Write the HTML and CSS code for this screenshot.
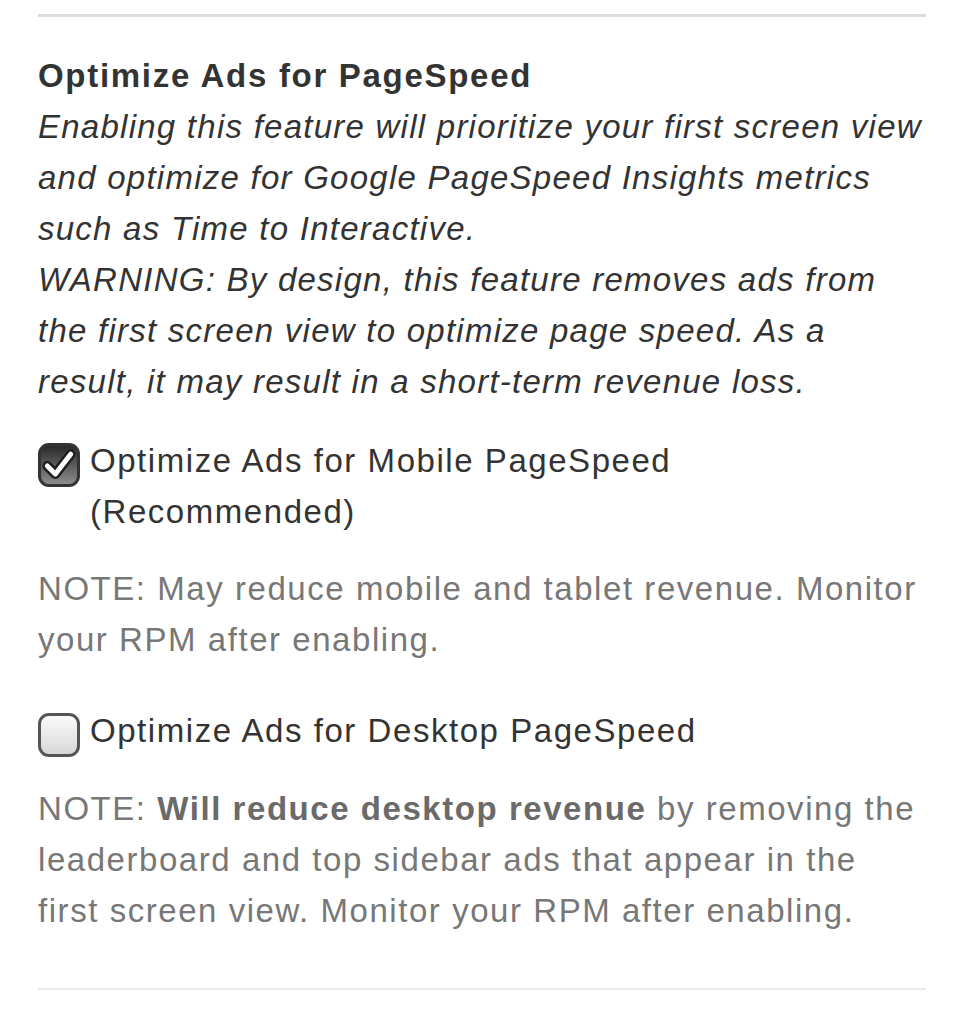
FILE: index.html
```html
<!DOCTYPE html>
<html>
<head>
    <meta charset="utf-8">
    <title>PageSpeed Settings</title>
    <link rel="stylesheet" href="styles.css">
</head>
<body>
    <div class="panel">
        <hr class="divider">

        <div class="setting">
            <h3 class="setting-title">Optimize Ads for PageSpeed</h3>
            <p class="setting-desc">
                Enabling this feature will prioritize your first screen view and optimize for Google PageSpeed Insights metrics such as Time to Interactive.
                <br>
                WARNING: By design, this feature removes ads from the first screen view to optimize page speed. As a<br>result, it may result in a short-term revenue loss.
            </p>

            <label class="option">
                <span class="checkbox checked">
                    <svg viewBox="0 0 40 40" width="36" height="36">
                        <path d="M7 21 L16 30 L33 8" fill="none" stroke="#1e1e1e" stroke-width="11" stroke-linecap="round" stroke-linejoin="round"/>
                        <path d="M7 21 L16 30 L33 8" fill="none" stroke="#fff" stroke-width="5.5" stroke-linecap="round" stroke-linejoin="round"/>
                    </svg>
                </span>
                <span class="option-text">Optimize Ads for Mobile PageSpeed<br>(Recommended)</span>
            </label>
            <p class="note">NOTE: May reduce mobile and tablet revenue. Monitor your RPM after enabling.</p>

            <label class="option option-spaced">
                <span class="checkbox"></span>
                <span class="option-text">Optimize Ads for Desktop PageSpeed</span>
            </label>
            <p class="note">NOTE: <strong>Will reduce desktop revenue</strong> by removing the leaderboard and top sidebar ads that appear in the<br>first screen view. Monitor your RPM after enabling.</p>
        </div>

        <hr class="divider divider-light">
    </div>
</body>
</html>
```

FILE: styles.css
```css
body {
    margin: 0;
    background: #fff;
    font-family: "Liberation Sans", Arial, Helvetica, sans-serif;
    color: #333;
}

.panel {
    width: 888px;
    padding: 14px 0 0 38px;
}

.divider {
    margin: 0;
    border: 0;
    height: 3px;
    background: #dddddd;
}

.divider-light {
    height: 2px;
    margin-top: 52px;
    background: #eaeaea;
}

.setting {
    padding-top: 33px;
    font-size: 33px;
    line-height: 51px;
    letter-spacing: 1.55px;
}

.setting-title {
    margin: 0;
    font-size: 33px;
    font-weight: bold;
    line-height: 51px;
    letter-spacing: 1.7px;
}

.setting-desc {
    margin: 0;
    font-style: italic;
    letter-spacing: 1.25px;
}

.option {
    display: flex;
    align-items: flex-start;
    gap: 10px;
    margin-top: 28px;
}

.option-spaced {
    margin-top: 40px;
}

.checkbox {
    flex: none;
    box-sizing: border-box;
    width: 42px;
    height: 44px;
    margin-top: 8px;
    border: 3px solid #555;
    border-radius: 11px;
    background: linear-gradient(#fafafa, #d8d8d8);
    display: flex;
    align-items: center;
    justify-content: center;
}

.checkbox.checked {
    border-color: #333;
    background: linear-gradient(#2a2a2a, #8c8c8c);
}

.note {
    margin: 26px 0 0;
    color: #777;
}

.note strong {
    color: #6a6a6a;
}
```
